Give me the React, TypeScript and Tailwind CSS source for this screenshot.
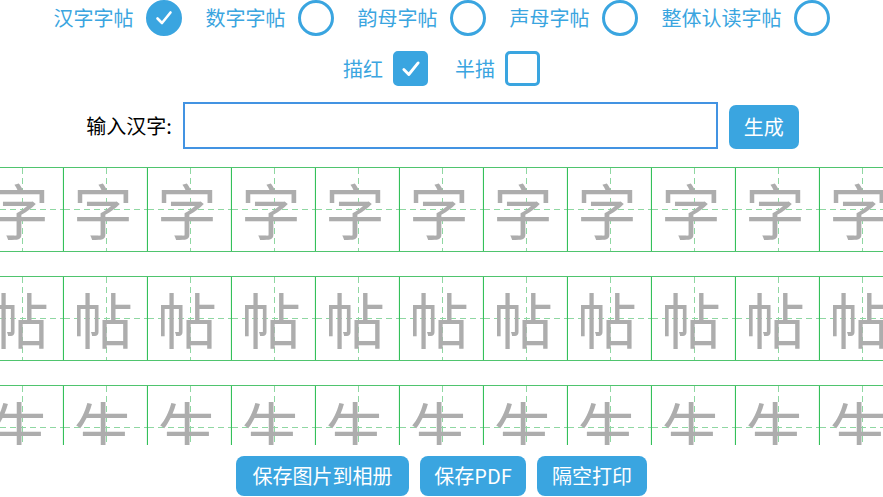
import React, { useState } from 'react'

const BLUE = 'text-[#3aa5e0]'

// Round radio with check mark
const Radio = ({ checked }: { checked: boolean }) => (
  <span
    className={`flex items-center justify-center w-[36px] h-[36px] rounded-full border-[3px] border-[#3aa5e0] ${checked ? 'bg-[#3aa5e0]' : 'bg-white'}`}
  >
    {checked && (
      <svg width="20" height="20" viewBox="0 0 20 20" fill="none">
        <path d="M3.5 10.5 L8 15 L16.5 4.5" stroke="white" strokeWidth="2.6" strokeLinecap="round" strokeLinejoin="round" />
      </svg>
    )}
  </span>
)

// Square checkbox
const Check = ({ checked }: { checked: boolean }) => (
  <span
    className={`flex items-center justify-center w-[35px] h-[35px] rounded-[5px] border-[3px] border-[#3aa5e0] ${checked ? 'bg-[#3aa5e0]' : 'bg-white'}`}
  >
    {checked && (
      <svg width="22" height="22" viewBox="0 0 20 20" fill="none">
        <path d="M3.5 10.5 L8 15 L16.5 4.5" stroke="white" strokeWidth="2.6" strokeLinecap="round" strokeLinejoin="round" />
      </svg>
    )}
  </span>
)

// One 田字格 cell: solid right edge + dashed centre cross
const Cell = ({ ch }: { ch: string }) => (
  <div className="relative flex items-center justify-center w-[84px] h-[83px] shrink-0">
    <svg className="absolute inset-0" width="84" height="83" viewBox="0 0 84 83">
      <line x1="0" y1="41.5" x2="84" y2="41.5" stroke="#8fd7a2" strokeWidth="1" strokeDasharray="6 4" />
      <line x1="42.5" y1="0" x2="42.5" y2="83" stroke="#8fd7a2" strokeWidth="1" strokeDasharray="6 4" />
      <line x1="83.5" y1="0" x2="83.5" y2="83" stroke="#34c05a" strokeWidth="1.2" />
    </svg>
    <span className="relative text-[60px] leading-none text-[#adadad] -translate-x-[3px] -translate-y-[1px]">{ch}</span>
  </div>
)

const GridRow = ({ ch }: { ch: string }) => (
  <div className="flex shrink-0 w-[925px] border-y border-l border-[#4fc46e]">
    {Array.from({ length: 11 }).map((_, i) => (
      <Cell key={i} ch={ch} />
    ))}
  </div>
)

export default function App() {
  const [text, setText] = useState('')
  const types = [
    { label: '汉字字帖', checked: true },
    { label: '数字字帖', checked: false },
    { label: '韵母字帖', checked: false },
    { label: '声母字帖', checked: false },
    { label: '整体认读字帖', checked: false },
  ]

  return (
    <div
      className="w-[883px] h-[497px] overflow-hidden bg-white flex flex-col items-center"
      style={{ fontFamily: '"Noto Sans CJK SC", "Noto Sans", sans-serif' }}
    >
      {/* Type selector */}
      <div className={`flex items-center gap-[24px] h-[36px] text-[20px] ${BLUE}`}>
        {types.map((t) => (
          <div key={t.label} className="flex items-center gap-[12px]">
            <span className="leading-none">{t.label}</span>
            <Radio checked={t.checked} />
          </div>
        ))}
      </div>

      {/* Trace mode */}
      <div className={`flex items-center gap-[27px] mt-[15px] text-[20px] ${BLUE}`}>
        <div className="flex items-center gap-[10px]">
          <span className="leading-none">描红</span>
          <Check checked={true} />
        </div>
        <div className="flex items-center gap-[10px]">
          <span className="leading-none">半描</span>
          <Check checked={false} />
        </div>
      </div>

      {/* Input */}
      <div className="flex items-center gap-[11px] mt-[16px] ml-[2px]">
        <span className="text-[20px] text-black leading-none">输入汉字:</span>
        <input
          value={text}
          onChange={(e) => setText(e.target.value)}
          className="w-[535px] h-[47px] border-2 border-[#4393e2] outline-none px-2 text-[20px]"
        />
        <button className="w-[70px] h-[44px] mt-[3px] rounded-[7px] bg-[#3aa5e0] text-white text-[20px]">生成</button>
      </div>

      {/* Practice grid */}
      <div className="mt-[18px] w-full h-[278px] overflow-hidden flex flex-col items-center gap-[24px]">
        <GridRow ch="字" />
        <GridRow ch="帖" />
        <GridRow ch="生" />
      </div>

      {/* Actions */}
      <div className="flex items-center gap-[11px] mt-[11px]">
        <button className="w-[173px] h-[40px] rounded-[8px] bg-[#3aa5e0] text-white text-[20px]">保存图片到相册</button>
        <button className="w-[106px] h-[40px] rounded-[8px] bg-[#3aa5e0] text-white text-[20px]">保存PDF</button>
        <button className="w-[110px] h-[40px] rounded-[8px] bg-[#3aa5e0] text-white text-[20px]">隔空打印</button>
      </div>
    </div>
  )
}
